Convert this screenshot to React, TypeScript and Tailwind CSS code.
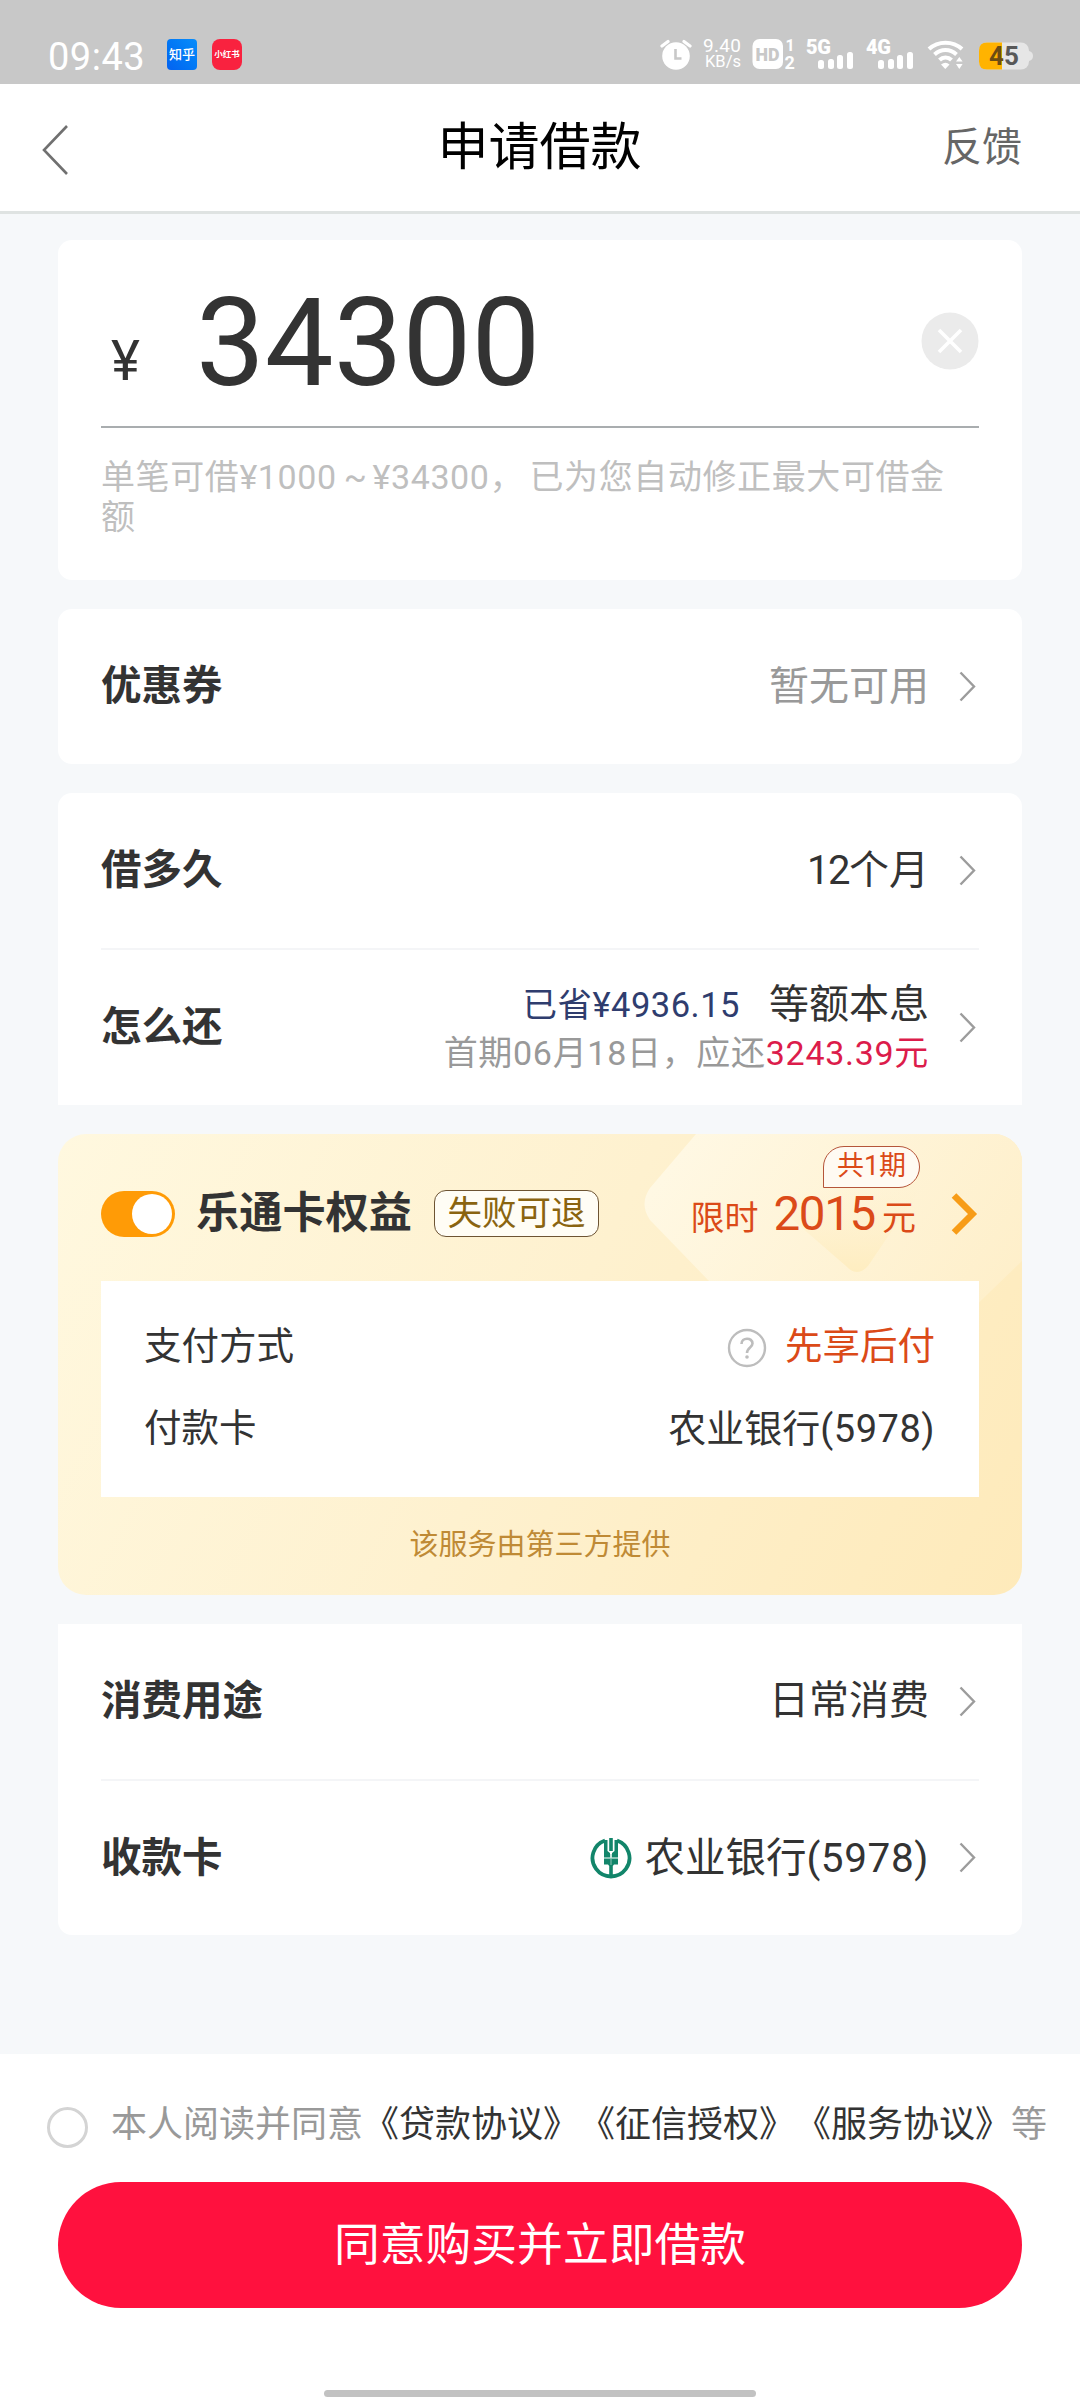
import React from "react";

const Chevron = ({ className = "" }: { className?: string }) => (
  <svg className={"shrink-0 " + className} width="17" height="31" viewBox="0 0 17 31" fill="none">
    <path d="M1.5 1.5L15 15.5L1.5 29.5" stroke="#9c9c9c" strokeWidth="2.4" />
  </svg>
);

const Row = ({ label, children }: { label: string; children: React.ReactNode }) => (
  <div className="flex flex-1 items-center justify-between">
    <p className="text-[40.5px] leading-none font-bold">{label}</p>
    <div className="flex items-center">
      {children}
      <Chevron className="ml-[30px] mr-[3px]" />
    </div>
  </div>
);

const Signal = ({ name }: { name: string }) => (
  <svg className="overflow-visible" width="52" height="32" viewBox="0 0 52 32" fill="#fff">
    <text x="0" y="15.5" fontSize="20" fontWeight="900" fontFamily="Roboto" textLength="25">
      {name}
    </text>
    <rect x="12" y="22" width="6" height="9" rx="2.5" />
    <rect x="22" y="21" width="6" height="10" rx="2.5" />
    <rect x="31" y="17" width="6" height="14" rx="2.5" />
    <rect x="41" y="14" width="6" height="17" rx="2.5" />
  </svg>
);

const StatusBar = () => (
  <div className="flex h-[84px] items-start bg-[#c8c8c8] text-white">
    <p className="mt-[37px] ml-[48px] w-[119px] text-[38px] leading-[40px] tracking-[0.5px]">09:43</p>
    <div className="mt-[39px] flex h-[31px] w-[30px] items-center justify-center rounded-[4px] bg-linear-to-bl from-[#0a8dfa] to-[#0562f0] text-[13px] leading-none font-medium">
      知乎
    </div>
    <div className="mt-[39px] ml-[15px] flex h-[31px] w-[30px] items-center justify-center rounded-[8px] bg-[#f9223f] text-[8.5px] leading-none font-bold">
      小红书
    </div>
    <div className="mt-[38px] ml-auto flex h-8 items-center">
      {/* Alarm */}
      <svg width="32" height="32" viewBox="0 0 32 32" fill="none">
        <circle cx="16" cy="18" r="13.8" fill="#fff" />
        <path d="M2 8L8 3.5M30 8L24 3.5" stroke="#fff" strokeWidth="3.2" strokeLinecap="round" />
        <path d="M15.5 11V20.5H21.5" stroke="#c8c8c8" strokeWidth="2.6" />
      </svg>
      {/* Network speed */}
      <div className="ml-[11px] flex w-[40px] flex-col">
        <p className="text-[19px] leading-[16px] tracking-[0.3px]">9.40</p>
        <p className="pl-[2px] text-[16.5px] leading-[16px]">KB/s</p>
      </div>
      {/* HD */}
      <svg className="ml-[9px] overflow-visible" width="44" height="32" viewBox="0 0 44 32" fill="#fff" fontFamily="Roboto">
        <rect x="0.5" y="1" width="30.5" height="30" rx="7" />
        <text x="3.5" y="22.5" fontSize="19" fontWeight="900" fill="#c8c8c8" textLength="24" lengthAdjust="spacingAndGlyphs">HD</text>
        <text x="33.5" y="13" fontSize="16" fontWeight="700">1</text>
        <text x="32.5" y="31" fontSize="18" fontWeight="700">2</text>
      </svg>
      <div className="ml-[10px] flex gap-2">
        <Signal name="5G" />
        <Signal name="4G" />
      </div>
      {/* Wifi */}
      <svg className="ml-[9px]" width="38" height="32" viewBox="0 0 38 32" fill="none">
        <path d="M2 11C11 2.5 26 2.5 35 11" stroke="#fff" strokeWidth="4" />
        <path d="M7.5 16.5C14 10.5 23 10.5 29.5 16.5" stroke="#fff" strokeWidth="4" />
        <path d="M12.5 22C16 18.5 21 18.5 24.5 22" stroke="#fff" strokeWidth="4" />
        <path d="M14 26.5Q18.5 23 22.5 26.5L18.3 31Z" fill="#fff" />
        <path d="M29 23.5L32.3 19L35.6 23.5ZM29 26L32.3 31L35.6 26Z" fill="#fff" />
      </svg>
      {/* Battery */}
      <svg className="mr-[46px] ml-[13px]" width="56" height="32" viewBox="0 0 56 32">
        <rect x="1" y="4.5" width="50" height="27" rx="8" fill="#e6e6e6" />
        <path d="M51 13Q55 14 55 18Q55 22 51 23Z" fill="#e6e6e6" />
        <path d="M9 4.5H24V31.5H9Q1 31.5 1 23.5V12.5Q1 4.5 9 4.5Z" fill="#ffb300" />
        <text x="11" y="27" fontSize="26" fontWeight="700" fontFamily="Roboto" textLength="30" fill="#6b4d12">
          4<tspan fill="#585858">5</tspan>
        </text>
      </svg>
    </div>
  </div>
);

const Header = () => (
  <div className="flex h-[130px] items-center justify-between border-b-[3px] border-[#dfe3e2] bg-white pr-[58px] pl-[42px]">
    <svg className="mt-1" width="98" height="50" viewBox="0 0 98 50" fill="none">
      <path d="M25 1L2 25L25 49" stroke="#707070" strokeWidth="2.6" />
    </svg>
    <p className="mr-[3px] text-[51px] leading-none text-black">申请借款</p>
    <p className="text-[40px] leading-none text-[#666]">反馈</p>
  </div>
);

const AmountCard = () => (
  <div className="h-[340px] rounded-[14px] bg-white px-[43px]">
    <div className="flex h-[188px] items-center border-b-2 border-[#a9adaf]">
      <p className="mt-[57px] w-[95px] pl-[10px] text-[55px] leading-none">¥</p>
      <p className="mt-[20px] text-[122.5px] leading-none">34300</p>
      <svg className="mt-[15px] ml-auto" width="58" height="58" viewBox="0 0 58 58">
        <circle cx="29" cy="29" r="28.5" fill="#ebebeb" />
        <path d="M18 18L40 40M40 18L18 40" stroke="#fff" strokeWidth="3.6" />
      </svg>
    </div>
    <p className="mt-[29px] pr-5 text-[34px] leading-[40px] tracking-[0.6px] text-[#bfbfbf]">
      单笔可借¥1000<span className="tracking-[-1.4px]"> ~ </span>¥34300<span className="tracking-[6px]">，</span>已为您自动修正最大可借金额
    </p>
  </div>
);

const MemberCard = () => (
  <div className="relative h-[461px] overflow-hidden rounded-[28px] bg-linear-[118deg] from-[#fff8df] via-[#fef1cf] to-[#feeaba] px-[43px]">
    <svg className="absolute top-0 left-0" width="964" height="461" viewBox="0 0 964 461">
      <defs>
        <linearGradient id="gem" x1="0" y1="0" x2="1" y2="0.5">
          <stop offset="0" stopColor="#fff9e6" />
          <stop offset="1" stopColor="#feefca" />
        </linearGradient>
        <linearGradient id="core" x1="0" y1="0" x2="0" y2="1">
          <stop offset="0" stopColor="#fef0cb" stopOpacity="0" />
          <stop offset="1" stopColor="#feedc0" />
        </linearGradient>
      </defs>
      <path d="M638 0L592 54Q581 70 592 86L770 270H816L964 127V0Z" fill="url(#gem)" />
      <path d="M722 55H862L810 132Q799 144 788 132L728 80Z" fill="url(#core)" />
    </svg>
    <div className="relative flex h-[147px] items-center pt-[12px]">
      {/* Switch */}
      <div className="flex h-[46px] w-[74px] items-center justify-end rounded-full bg-[#ff9b06] pr-[3px]">
        <div className="size-[40px] rounded-full bg-white" />
      </div>
      <p className="ml-[21px] text-[43.2px] leading-none font-bold">乐通卡权益</p>
      <p className="ml-[22px] flex h-[47px] w-[165px] items-center justify-center rounded-[12px] border-[1.5px] border-[#6d5433] bg-[#fffdf5] text-[34.5px] leading-none text-[#8a6410]">
        失败可退
      </p>
      <div className="relative mt-[3px] ml-auto flex items-baseline text-[34px] leading-none text-[#db4a18]">
        <p>限时</p>
        <p className="mr-[7px] ml-[15px] text-[47.5px] tracking-[-1.3px]">2015</p>
        <p>元</p>
        <p className="absolute -top-[45px] right-[-4px] flex h-[42px] w-[97px] items-center justify-center rounded-full rounded-bl-none border border-[#b5553a] bg-[#fffaf2] pb-[1px] text-[27px] leading-none">
          共1期
        </p>
      </div>
      <svg className="mr-[1px] ml-[35px]" width="27" height="42" viewBox="0 0 27 42" fill="none">
        <path d="M3 2.5L21.5 21L3 39.5" stroke="#f79c17" strokeWidth="6.5" />
      </svg>
    </div>
    <div className="relative flex h-[216px] flex-col gap-[42px] bg-white pt-[44px] pr-[44px] pl-[43px] text-[37.5px] leading-none">
      <div className="flex items-center justify-between">
        <p>支付方式</p>
        <div className="flex items-center">
          <svg className="mt-[3px] mr-[18px]" width="40" height="40" viewBox="0 0 40 40" fill="none">
            <circle cx="20" cy="20" r="18" stroke="#bdbdbd" strokeWidth="2.4" />
            <path d="M14.5 16C14.5 9 25.5 9 25.5 15.5C25.5 19.5 20 19.5 20 25" stroke="#bdbdbd" strokeWidth="2.6" />
            <circle cx="20" cy="29" r="1.8" fill="#bdbdbd" />
          </svg>
          <p className="text-[#db4a18]">先享后付</p>
        </div>
      </div>
      <div className="flex items-center justify-between">
        <p>付款卡</p>
        <p className="text-[38px]">
          农业银行<span className="tracking-[0.5px]">(5978)</span>
        </p>
      </div>
    </div>
    <p className="relative mt-[34px] text-center text-[29px] leading-none text-[#bf8a35]">该服务由第三方提供</p>
  </div>
);

const BankLogo = () => (
  <svg className="mr-[12px]" width="42" height="42" viewBox="0 0 42 42" fill="none">
    <path d="M15 3.5A18.5 18.5 0 1 0 27 3.5" stroke="#12856a" strokeWidth="3.8" />
    <path d="M19.2 1H22.8V14H19.2Z" fill="#12856a" />
    <path d="M14 3H17.5V14L20 16V20.5H14ZM28 3H24.5V14L22 16V20.5H28Z" fill="#12856a" />
    <path d="M14 21.5H28V27.5H24L22.8 29V39H19.2V29L18 27.5H14Z" fill="#12856a" />
    <path d="M21 17V28" stroke="#8fc7b8" />
  </svg>
);

const Footer = () => (
  <div className="mt-auto flex h-[346px] flex-col items-center bg-white">
    <div className="mt-[49px] flex w-full items-center pl-[47px] text-[36px] leading-none whitespace-nowrap text-[#999] [text-spacing-trim:space-all]">
      <div className="mt-1 mr-[23px] size-[41px] rounded-full border-[3px] border-[#d4d4d4]" />
      <p className="-mt-[2px]">
        本人阅读并同意<span className="text-[#333]">《贷款协议》《征信授权》《服务协议》</span>等
      </p>
    </div>
    <button className="mt-[34px] h-[126px] w-[964px] rounded-full bg-[#ff113e] pt-[2px] text-[45.8px] leading-none text-white">
      同意购买并立即借款
    </button>
    <div className="mt-auto mb-[3px] h-[7px] w-[432px] rounded-full bg-[#c2c2c2]" />
  </div>
);

const App = () => {
  return (
    <div className="flex h-[2400px] w-[1080px] flex-col bg-[#f6f8fa] font-['Roboto','Noto_Sans_CJK_SC',sans-serif] text-[#333]">
      <StatusBar />
      <Header />

      <div className="flex flex-col gap-[29px] px-[58px] pt-[26px]">
        <AmountCard />

        {/* Coupon */}
        <div className="flex h-[155px] rounded-[14px] bg-white px-[43px]">
          <Row label="优惠券">
            <p className="text-[40px] leading-none text-[#999]">暂无可用</p>
          </Row>
        </div>

        {/* Term and repayment */}
        <div className="flex h-[312px] flex-col rounded-t-[14px] bg-white px-[43px]">
          <Row label="借多久">
            <p className="text-[40px] leading-none">
              <span className="tracking-[-1.5px]">12</span>个月
            </p>
          </Row>
          <hr className="h-[2px] border-0 bg-[#f4f5f7]" />
          <Row label="怎么还">
            <div className="flex flex-col items-end gap-[11px]">
              <div className="flex items-center gap-[29px] leading-none">
                <p className="text-[34.5px] tracking-[0.5px] text-[#2f3d6e]">已省¥4936.15</p>
                <p className="text-[40px]">等额本息</p>
              </div>
              <p className="text-[34px] leading-none tracking-[0.7px] text-[#999]">
                首期06月18日，应还<span className="text-[#dc1c4b]">3243.39元</span>
              </p>
            </div>
          </Row>
        </div>

        <MemberCard />

        {/* Purpose and card */}
        <div className="flex h-[311px] flex-col rounded-b-[14px] bg-white px-[43px]">
          <Row label="消费用途">
            <p className="text-[40px] leading-none">日常消费</p>
          </Row>
          <hr className="h-[2px] border-0 bg-[#f4f5f7]" />
          <Row label="收款卡">
            <BankLogo />
            <p className="text-[40.5px] leading-none">
              农业银行<span className="tracking-[0.6px]">(5978)</span>
            </p>
          </Row>
        </div>
      </div>

      <Footer />
    </div>
  );
};

export default App;
